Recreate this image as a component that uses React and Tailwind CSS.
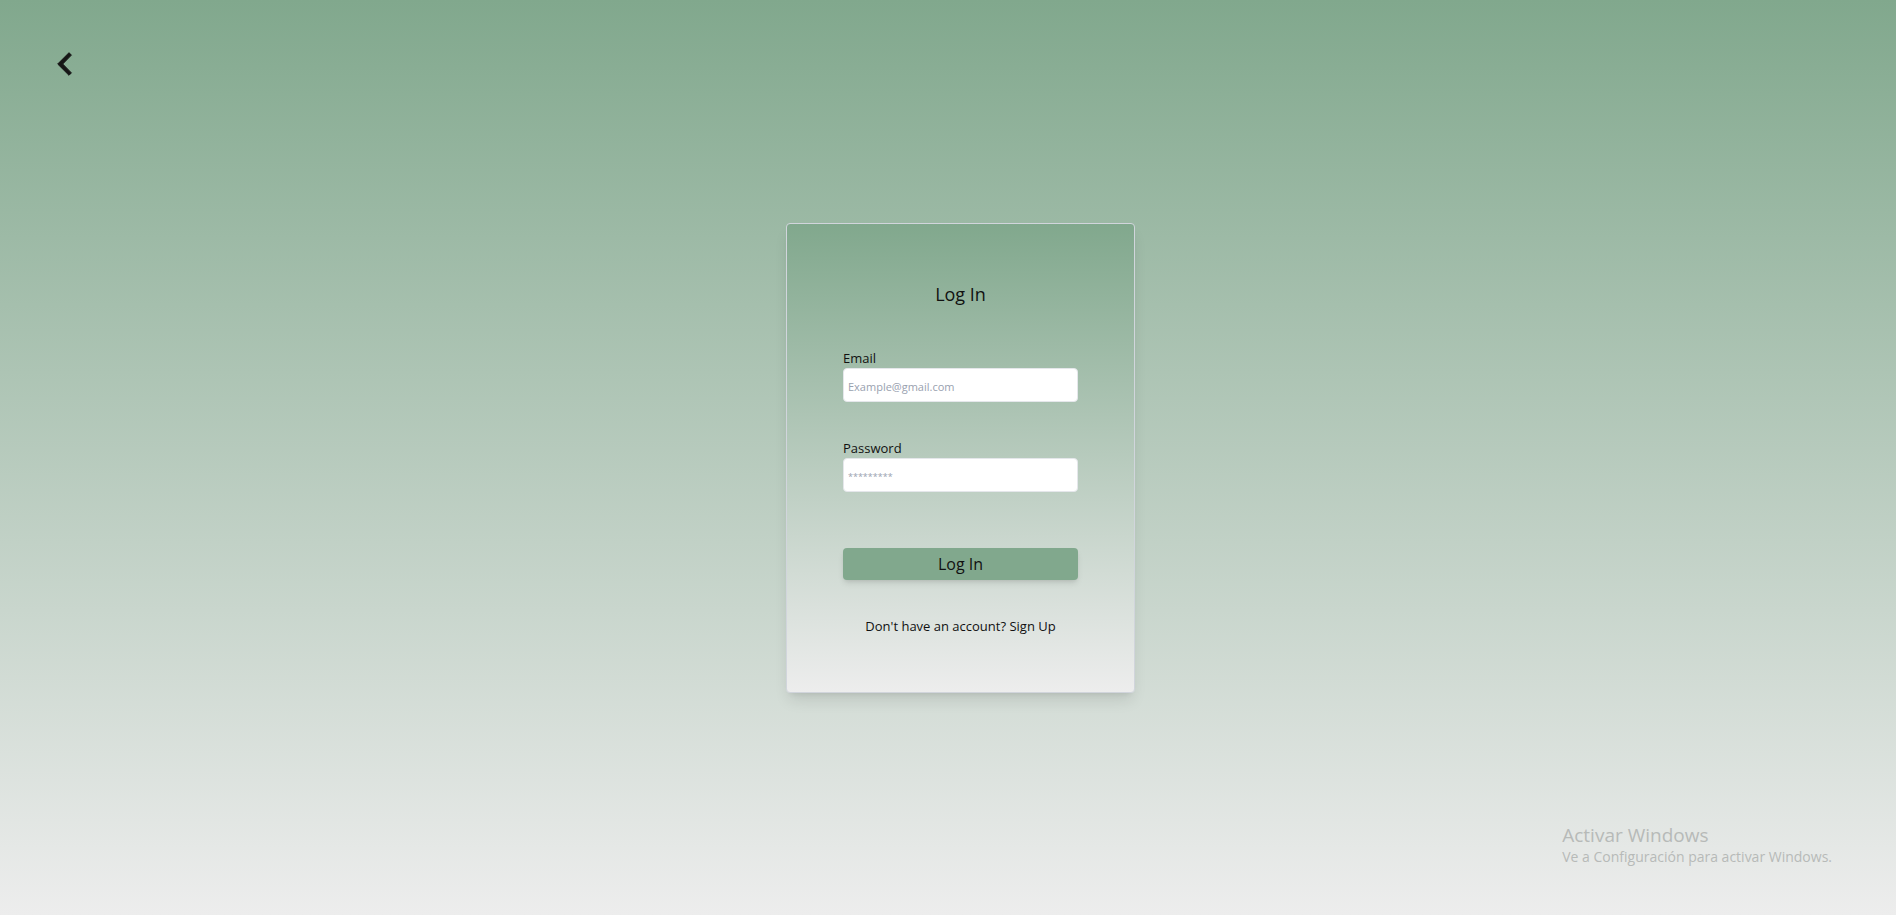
function Field({ id, label, ...props }) {
  return (
    <div className="flex flex-col">
      <label htmlFor={id} className="text-[13px] leading-5">
        {label}
      </label>
      <input
        id={id}
        className="h-[34px] w-full rounded border border-gray-200 bg-white px-1 pt-1 text-[11px] text-gray-900 placeholder:text-gray-400 [&[type=password]]:text-[9px]"
        {...props}
      />
    </div>
  );
}

export default function App() {
  return (
    <div className="grid min-h-screen grid-cols-1 grid-rows-1 bg-linear-to-b/srgb from-[#81a88d] to-[#ededed] font-['Open_Sans','Noto_Sans',sans-serif] text-gray-900">
      <button
        type="button"
        aria-label="Go back"
        className="col-start-1 row-start-1 mt-12 ml-12 size-8 cursor-pointer self-start text-[#161616]"
      >
        <svg viewBox="0 0 32 32" className="size-8" fill="currentColor" stroke="currentColor" strokeWidth="1" strokeLinejoin="round">
          <path d="M21 4.7 L9.7 16 L21 27.3 L23.4 24.9 L14.7 16 L23.4 7.1 Z" />
        </svg>
      </button>

      <main className="col-start-1 row-start-1 place-self-center pl-[25px]">
        <form className="flex w-[349px] flex-col rounded border border-gray-300 bg-linear-to-b/srgb from-[#81a88d] to-[#ededed] p-14 text-[#111111] shadow-lg">
          <h1 className="mb-10 text-center text-lg leading-7">Log In</h1>
          <div className="mb-14 flex flex-col gap-9">
            <Field id="email" label="Email" type="email" placeholder="Example@gmail.com" />
            <Field id="password" label="Password" type="password" placeholder="*********" />
          </div>
          <button
            type="submit"
            className="mb-9 h-8 cursor-pointer rounded bg-[#81a88d] text-base leading-6 shadow-md"
          >
            Log In
          </button>
          <p className="text-center text-[13px] leading-5">
            Don't have an account? <a href="#signup">Sign Up</a>
          </p>
        </form>
      </main>

      <aside className="pointer-events-none col-start-1 row-start-1 mr-16 mb-12 place-self-end text-[#b7bab8]">
        <p className="text-[19px] leading-6">Activar Windows</p>
        <p className="text-[14px] leading-5">Ve a Configuración para activar Windows.</p>
      </aside>
    </div>
  );
}
